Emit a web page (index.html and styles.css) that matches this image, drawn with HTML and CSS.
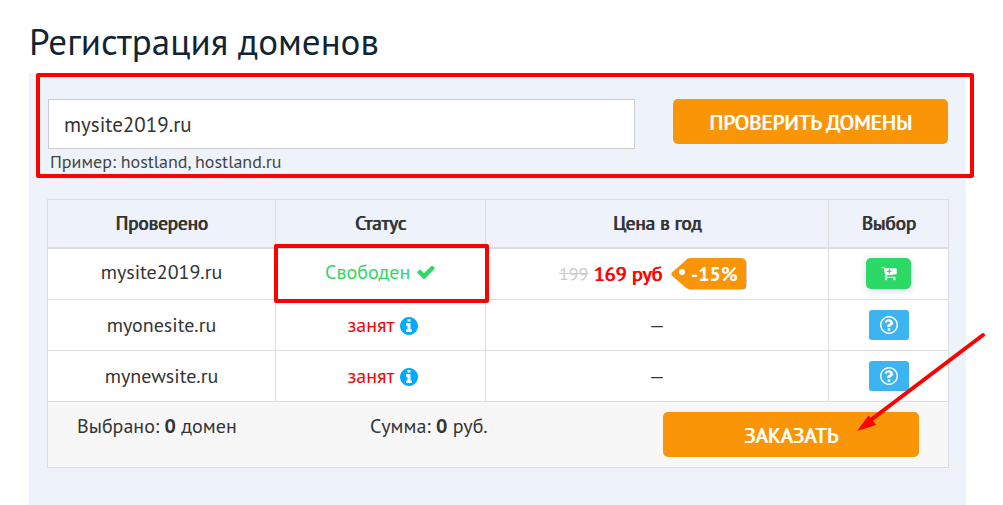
FILE: index.html
```html
<!DOCTYPE html>
<html lang="ru">
<head>
<meta charset="utf-8">
<meta name="viewport" content="width=device-width, initial-scale=1">
<title>Регистрация доменов</title>
<link rel="stylesheet" href="styles.css">
</head>
<body>
<svg class="sprite" aria-hidden="true">
  <symbol id="check" viewBox="0 0 1792 1792"><path d="M1671 566q0 40-28 68l-724 724-136 136q-28 28-68 28t-68-28l-136-136-362-362q-28-28-28-68t28-68l136-136q28-28 68-28t68 28l294 295 656-657q28-28 68-28t68 28l136 136q28 28 28 68z"/></symbol>
  <symbol id="info" viewBox="128 128 1536 1536"><path d="M1152 1376v-160q0-14-9-23t-23-9h-96v-512q0-14-9-23t-23-9h-320q-14 0-23 9t-9 23v160q0 14 9 23t23 9h96v320h-96q-14 0-23 9t-9 23v160q0 14 9 23t23 9h448q14 0 23-9t9-23zm-128-896v-160q0-14-9-23t-23-9h-192q-14 0-23 9t-9 23v160q0 14 9 23t23 9h192q14 0 23-9t9-23zm640 416q0 209-103 385.5t-279.5 279.5-385.5 103-385.5-103-279.5-279.5-103-385.5 103-385.5 279.5-279.5 385.5-103 385.5 103 279.5 279.5 103 385.5z"/></symbol>
  <symbol id="question" viewBox="128 128 1536 1536"><path d="M1008 1200v160q0 14-9 23t-23 9h-160q-14 0-23-9t-9-23v-160q0-14 9-23t23-9h160q14 0 23 9t9 23zm256-496q0 50-15 90t-45.500 69-52 44-59.500 36q-32 18-46.500 28t-26 24-11.500 29v32h-256v-68q0-35 10.500-64.500t24-47.500 39-35.500 41-25.500 44.500-21q53-25 75-43t22-49q0-42-43.500-71.500t-95.500-29.500q-56 0-95 27-29 20-80 83-9 12-25 12-11 0-19-6l-108-82q-10-7-12-20t5-23q122-192 349-192 129 0 238.500 89.500t109.500 214.500zm-368-448q-130 0-248.500 51t-204 136.500-136.500 204-51 248.500 51 248.500 136.500 204 204 136.500 248.500 51 248.500-51 204-136.500 136.500-204 51-248.500-51-248.500-136.500-204-204-136.500-248.500-51zm768 640q0 209-103 385.500t-279.500 279.500-385.500 103-385.500-103-279.500-279.500-103-385.500 103-385.500 279.500-279.500 385.500-103 385.500 103 279.500 279.500 103 385.500z"/></symbol>
  <symbol id="cart" viewBox="64 192 1728 1472"><path fill-rule="evenodd" d="M1216 640q0-26-19-45t-45-19h-128v-128q0-26-19-45t-45-19-45 19-19 45v128h-128q-26 0-45 19t-19 45 19 45 45 19h128v128q0 26 19 45t45 19 45-19 19-45v-128h128q26 0 45-19t19-45zm-480 832q0 53-37.500 90.500t-90.500 37.500-90.500-37.500-37.500-90.500 37.500-90.500 90.500-37.500 90.500 37.500 37.500 90.500zm896 0q0 53-37.500 90.500t-90.500 37.500-90.500-37.500-37.500-90.500 37.500-90.500 90.500-37.500 90.500 37.500 37.500 90.500zm128-1088v512q0 24-16 42.500t-41 21.500l-1044 122q1 7 4.500 21.500t6 26.500 2.500 22q0 16-24 64h920q26 0 45 19t19 45-19 45-45 19h-1024q-26 0-45-19t-19-45q0-14 11-39.500t29.500-59.500 20.500-38l-177-823h-204q-26 0-45-19t-19-45 19-45 45-19h256q16 0 28.500 6.500t20 15.500 13 24.500 7.500 26.500 5.500 29.500 4.500 25.500h1201q26 0 45 19t19 45z"/></symbol>
</svg>

<main class="page">
  <h1 class="title">Регистрация доменов</h1>
  <div class="panel">
    <form class="search">
      <div class="search-field">
        <input class="search-input" id="domain" type="text" value="mysite2019.ru" aria-label="Домен" aria-describedby="hint">
        <label class="search-hint" id="hint" for="domain">Пример: hostland, hostland.ru</label>
      </div>
      <button class="button search-button" type="button">ПРОВЕРИТЬ ДОМЕНЫ</button>
      <span class="mark mark-search"></span>
    </form>

    <table class="domains">
      <colgroup>
        <col class="col-name"><col class="col-status"><col class="col-price"><col class="col-pick">
      </colgroup>
      <thead>
        <tr><th>Проверено</th><th>Статус</th><th>Цена в год</th><th>Выбор</th></tr>
      </thead>
      <tbody>
        <tr class="row-free">
          <td>mysite2019.ru</td>
          <td class="free">Свободен <svg class="icon"><use href="#check"/></svg><span class="mark mark-cell"></span></td>
          <td class="price-cell">
            <div class="price">
              <s class="price-old">199</s>
              <strong class="price-new">169 руб</strong>
              <span class="tag">
                <svg class="tag-shape" viewBox="0 0 76 32"><path d="M20 1.500H71Q75.500 1.500 75.500 6V27Q75.500 31.500 71 31.500H20Q17 31.500 15 29L2 18.500Q1 16.500 2 15.500L14 4Q17 1.500 20 1.500Z" fill="#999"/><path d="M19 0H70Q75 0 75 5V26Q75 31 70 31H19Q16 31 14 29L1 17.500Q-.500 16 1 14.500L14 3Q16 0 19 0Z" fill="#fa9507"/><circle cx="11" cy="14" r="3" fill="#fff"/></svg>
                <b class="tag-text">-15%</b>
              </span>
            </div>
          </td>
          <td><button class="pick pick-cart" type="button" aria-label="В корзину"><svg class="icon-cart"><use href="#cart"/></svg></button></td>
        </tr>
        <tr>
          <td>myonesite.ru</td>
          <td class="taken">занят <svg class="icon icon-info"><use href="#info"/></svg></td>
          <td>—</td>
          <td><button class="pick" type="button" aria-label="Подробнее"><svg class="icon"><use href="#question"/></svg></button></td>
        </tr>
        <tr>
          <td>mynewsite.ru</td>
          <td class="taken">занят <svg class="icon icon-info"><use href="#info"/></svg></td>
          <td>—</td>
          <td><button class="pick" type="button" aria-label="Подробнее"><svg class="icon"><use href="#question"/></svg></button></td>
        </tr>
      </tbody>
      <tfoot>
        <tr>
          <td colspan="4">
            <div class="summary">
              <span>Выбрано: <b>0</b> домен</span>
              <span>Сумма: <b>0</b> руб.</span>
              <div class="order">
                <button class="button" type="button">ЗАКАЗАТЬ</button>
                <svg class="arrow" viewBox="0 0 140 110"><path d="M133 7L22 91" stroke="#f00" stroke-width="4" stroke-linecap="round"/><path d="M7 103L18.500 87.500L22 91.500L26 97Z" fill="#f00"/></svg>
              </div>
            </div>
          </td>
        </tr>
      </tfoot>
    </table>
  </div>
</main>
</body>
</html>
```

FILE: styles.css
```css
* { box-sizing: border-box; }

body {
  margin: 0;
  background: #fff;
  color: #333;
  font: 20px/24px "PT Sans", "Noto Sans", sans-serif;
}

.sprite { display: none; }

.page {
  display: flex;
  flex-direction: column;
  min-height: 100vh;
  padding: 17px 37px 0 29px;
}

.title {
  margin: 0;
  padding-bottom: 8px;
  color: #112433;
  font-size: 37px;
  font-weight: 400;
  line-height: 48px;
}

.panel {
  flex: 1;
  padding-bottom: 37px;
  background: #eef3fb;
}

.search {
  position: relative;
  display: flex;
  align-items: flex-start;
  gap: 38px;
  padding: 26px 18px 3px 19px;
}

.search-field {
  display: flex;
  flex: 1;
  flex-direction: column;
}

.search-input {
  width: 100%;
  height: 50px;
  padding: 0 15px;
  border: 1px solid #ccc;
  background: #fff;
  color: #333;
  font: inherit;
  font-size: 21px;
}

.search-hint {
  padding-left: 2px;
  color: #444;
  font-size: 18px;
  line-height: 26px;
}

.button {
  width: 100%;
  height: 45px;
  padding: 2px 0 0;
  border: 0;
  border-radius: 5px;
  background: #fa9507;
  color: #fff;
  font: inherit;
  font-size: 21px;
  text-shadow: 1px 0 currentColor;
}

.search-button { width: 275px; }

.mark {
  position: absolute;
  border: 4px solid #f00;
  border-radius: 2px;
  pointer-events: none;
}

.mark-search { inset: 0 -8px 0 7px; }
.mark-cell { inset: -5px -4px -4px -2px; }

.domains {
  width: calc(100% - 35px);
  margin: 21px 17px 0 18px;
  border-collapse: collapse;
  table-layout: fixed;
  background: #fff;
}

.col-name { width: 25.3%; }
.col-status { width: 23.3%; }
.col-price { width: 38.1%; }
.col-pick { width: 13.3%; }

.domains th,
.domains td {
  height: 51px;
  padding: 0;
  border: 1px solid #ddd;
  text-align: center;
}

.domains th {
  height: 48px;
  border-bottom-width: 2px;
  background: #eef3fb;
  font-size: 19px;
  font-weight: 400;
  text-shadow: 1px 0 currentColor;
}

.domains .row-free td {
  height: 52px;
  padding-bottom: 3px;
}

.domains .row-free .price-cell {
  padding: 0 8px 0 0;
}

.domains .row-free td:last-child { padding-bottom: 0; }

.free {
  position: relative;
  color: #2bd964;
}

.domains .taken {
  padding-left: 5px;
  color: #f00;
}

.icon {
  width: 18px;
  height: 18px;
  fill: currentColor;
  vertical-align: -3px;
}

.free .icon {
  width: 20px;
  height: 20px;
}

.icon-info {
  margin-left: 1px;
  color: #03a9ff;
}

.price {
  display: flex;
  align-items: center;
  justify-content: center;
  gap: 5px;
}

.price-old {
  color: #ccc;
  font-size: 18px;
}

.price-new {
  color: #f00;
  font-weight: 400;
  text-shadow: 1px 0 currentColor;
}

.tag {
  position: relative;
  width: 76px;
  height: 32px;
  margin-left: 4px;
  padding-left: 20px;
  color: #fff;
  line-height: 32px;
  text-align: left;
}

.tag-shape {
  position: absolute;
  inset: 0;
  width: 76px;
  height: 32px;
}

.tag-text { position: relative; }

.pick {
  display: inline-flex;
  align-items: center;
  justify-content: center;
  width: 40px;
  height: 30px;
  padding: 0;
  border: 0;
  border-radius: 3px;
  background: #3db4f2;
  color: #fff;
  vertical-align: middle;
}

.pick-cart {
  width: 45px;
  height: 31px;
  border-radius: 5px;
  background: #2bd964;
  box-shadow: 0 2px 8px #d5dfef;
}

.icon-cart {
  width: 16px;
  height: 14px;
  fill: currentColor;
}

.domains tfoot td {
  height: 66px;
  background: #f7f7f7;
}

.summary {
  display: grid;
  grid-template-columns: 293fr 293fr 256fr;
  align-items: start;
  padding: 0 29px;
  line-height: 28px;
  text-align: left;
}

.order { position: relative; }

.arrow {
  position: absolute;
  top: -84px;
  right: -71px;
  width: 140px;
  height: 110px;
  fill: none;
  pointer-events: none;
}
```
